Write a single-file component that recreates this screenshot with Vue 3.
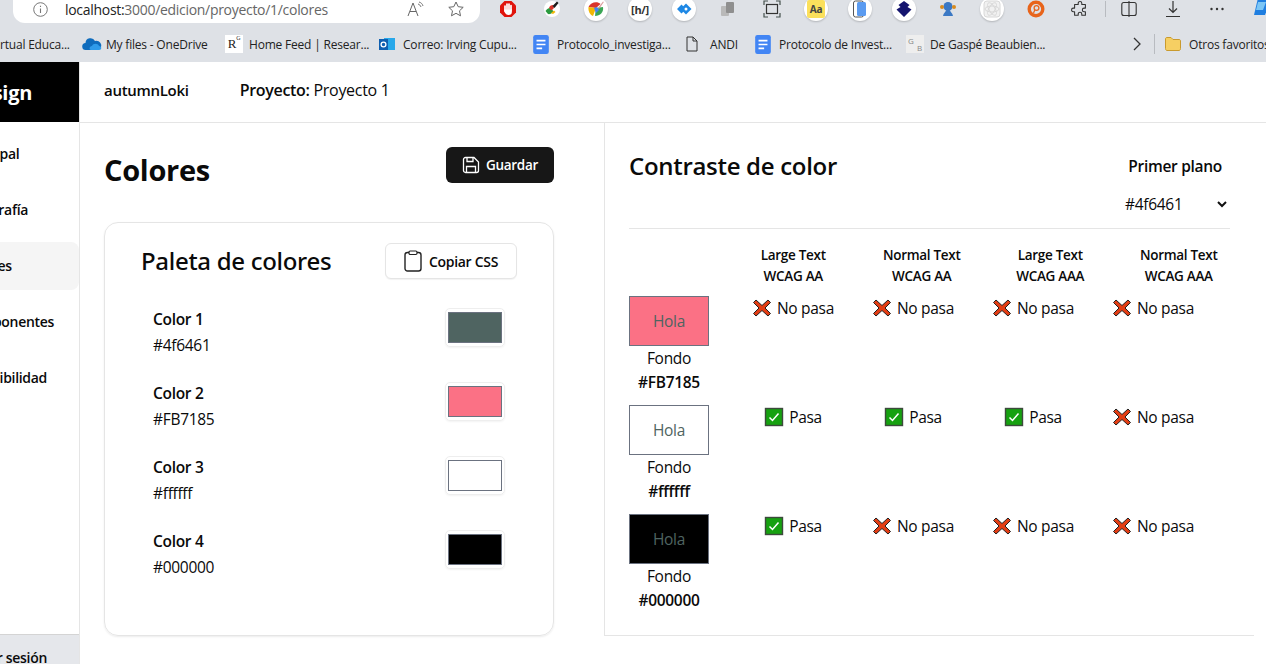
<template>
  <div class="page">
    <!-- Browser chrome -->
    <div class="browser">
      <div class="toolbar">
        <div class="address">
          <svg class="addr-info" width="15" height="15" viewBox="0 0 15 15" fill="none">
            <circle cx="7.500" cy="7.500" r="6.800" stroke="#777" stroke-width="1" />
            <path d="M7.500 6.500v4.500M7.500 3.800v1.300" stroke="#777" stroke-width="1.100" />
          </svg>
          <span class="url"><span class="url-host">localhost:</span>3000/edicion/proyecto/1/colores</span>
          <svg class="addr-read" width="20" height="16" viewBox="0 0 20 16" fill="none">
            <path d="M1 15 6 2l5 13M3 10.500h6" stroke="#666" stroke-width="1" />
            <path d="M11 3c1.500.5 2.500 1.500 3 3M12 1c2 .5 3.500 2 4 4" stroke="#666" stroke-width=".9" />
          </svg>
          <svg width="18" height="18" viewBox="0 0 18 18" fill="none">
            <path d="m9 2 2.200 4.700 5 .6-3.700 3.500 1 5L9 13.300 4.500 15.800l1-5L1.800 7.300l5-.6z" stroke="#666" stroke-width="1" stroke-linejoin="round" />
          </svg>
        </div>
        <div class="extensions">
          <span class="ext">
            <svg width="18" height="18" viewBox="0 0 18 18">
              <path d="M5.500 1h7L17 5.500v7L12.500 17h-7L1 12.500v-7z" fill="#e0140c" />
              <path d="M6 10.500V6M8 9.500V4M10 9.500V4M12 10V5.500" stroke="#fff" stroke-width="1.700" stroke-linecap="round" />
              <path d="M5.200 9.500h7.700v2.500c0 2-1.300 3-3.300 3-2.200 0-3-1-4.400-3.500z" fill="#fff" />
            </svg>
          </span>
          <span class="ext">
            <svg width="18" height="18" viewBox="0 0 18 18">
              <circle cx="9" cy="9" r="8" fill="#fff" />
              <path d="M2.500 11c1-2 3-3.500 5.500-3l2.500 3.500c-1.500 2-4 3-5.500 2.500z" fill="#2b9a3e" />
              <path d="M6 8c.5-2 2-3 4-3l1 3-2.500 2.500z" fill="#d9342b" />
              <path d="M9.500 6 14 1.500l1.500 1.500-4 5z" fill="#1c1c1c" />
              <path d="m8 13 3-2.500 1.500 1.500-2.500 2z" fill="#f2b705" />
            </svg>
          </span>
          <span class="ext ext-white">
            <svg width="18" height="18" viewBox="0 0 18 18">
              <path d="M1.500 7c2-5 9-6 12-3L9 8z" fill="#d9342b" />
              <path d="M1.500 7 9 8l-3 8C3 15 1 11 1.500 7z" fill="#f2b705" />
              <path d="m9 8 7-1c1 5-3 9-8 9z" fill="#3aa655" />
              <path d="m7 8 3-1 2 3-3 3z" fill="#4285f4" />
              <path d="M11 8 16 1.500l.8.6-4.800 7z" fill="#d99a9a" />
            </svg>
          </span>
          <span class="ext ext-white"><span class="ext-code">[h/]</span></span>
          <span class="ext ext-white">
            <svg width="18" height="18" viewBox="0 0 18 18">
              <path d="M11 3.500 16.500 9 11 14.500 5.500 9z" fill="#1e88e5" />
              <path d="M6.500 4.500 2 9l4.500 4.500L9 11 7 9l2-2z" fill="#1e88e5" />
              <circle cx="11" cy="9" r="1.500" fill="#fff" />
            </svg>
          </span>
          <span class="ext">
            <svg width="18" height="18" viewBox="0 0 18 18">
              <rect x="2" y="6" width="8" height="10" rx="1" fill="#b9b9b9" />
              <rect x="7" y="2" width="8" height="11" rx="1" fill="#8f8f8f" />
            </svg>
          </span>
          <span class="ext">
            <svg width="18" height="18" viewBox="0 0 18 18" fill="none">
              <path d="M1 5V1h4M13 1h4v4M17 13v4h-4M5 17H1v-4" stroke="#44504c" stroke-width="1.200" />
              <rect x="3.500" y="4.500" width="11" height="9" stroke="#333" stroke-width="1.200" />
            </svg>
          </span>
          <span class="ext ext-white"><span class="ext-aa">Aa</span></span>
          <span class="ext ext-white">
            <svg width="18" height="18" viewBox="0 0 18 18">
              <rect x="2.500" y="1" width="10" height="16" rx="2" fill="#fff" stroke="#555" />
              <rect x="6" y="2" width="9" height="14" rx="1.500" fill="#5b9bf0" />
            </svg>
          </span>
          <span class="ext ext-white">
            <svg width="18" height="18" viewBox="0 0 18 18">
              <path d="M9 1 14.500 5 12.500 7 16.500 9.500 9 17 1.500 9.500 5.500 7 3.500 5z" fill="#14146e" />
            </svg>
          </span>
          <span class="ext">
            <svg width="18" height="18" viewBox="0 0 18 18">
              <circle cx="9" cy="6.500" r="4.500" fill="#3b78c4" />
              <path d="M4 16c.5-3 2.500-4 3.500-6h3c1 2 3 3 3.500 6z" fill="#3b78c4" />
              <circle cx="3" cy="7" r="2" fill="#d88b1f" />
              <circle cx="15" cy="7" r="2" fill="#d88b1f" />
            </svg>
          </span>
          <span class="ext ext-white">
            <svg width="18" height="18" viewBox="0 0 18 18" fill="none" stroke="#d8d8d8">
              <rect x="1" y="1" width="16" height="16" rx="3" fill="#f1f1f1" />
              <ellipse cx="9" cy="9" rx="7" ry="3" />
              <ellipse cx="9" cy="9" rx="7" ry="3" transform="rotate(60 9 9)" />
              <ellipse cx="9" cy="9" rx="7" ry="3" transform="rotate(120 9 9)" />
            </svg>
          </span>
          <span class="ext">
            <svg width="18" height="18" viewBox="0 0 18 18" fill="none">
              <circle cx="9" cy="9" r="6.800" stroke="#e8641b" stroke-width="3.400" />
              <circle cx="9.500" cy="8" r="2.400" stroke="#e8641b" stroke-width="1.300" />
              <path d="M7.800 10 6.500 13" stroke="#e8641b" stroke-width="1.300" />
            </svg>
          </span>
          <span class="ext">
            <svg width="18" height="18" viewBox="0 0 20 20" fill="none">
              <path d="M8 3.500c0-2.500 4-2.500 4 0V5h4v4h-1.500c-2.500 0-2.500 4 0 4H16v4h-4v-1.500c0-2.500-4-2.500-4 0V17H4v-4H2.500c-2.500 0-2.500-4 0-4H4V5h4z" stroke="#333" stroke-width="1.200" stroke-linejoin="round" />
            </svg>
          </span>
          <span class="tool-divider"></span>
          <span class="ext">
            <svg width="16" height="16" viewBox="0 0 16 16" fill="none">
              <rect x=".8" y="1.500" width="14.400" height="13" rx="2" stroke="#333" stroke-width="1.100" />
              <path d="M8 0v16" stroke="#333" stroke-width="1.100" />
            </svg>
          </span>
          <span class="ext">
            <svg width="18" height="18" viewBox="0 0 18 18" fill="none">
              <path d="M9 1v11M5 8.500 9 12.500l4-4M2 16.500h14" stroke="#333" stroke-width="1.200" />
            </svg>
          </span>
          <span class="ext">
            <svg width="18" height="18" viewBox="0 0 18 18" fill="#333">
              <circle cx="3.500" cy="9" r="1.200" /><circle cx="9" cy="9" r="1.200" /><circle cx="14.500" cy="9" r="1.200" />
            </svg>
          </span>
          <span class="ext">
            <svg width="20" height="22" viewBox="0 0 20 22">
              <path d="M7 0h13l-6 17H3z" fill="#1f7ee0" />
              <path d="M7 4h8l-3 8H5z" fill="#7cc6f5" />
            </svg>
          </span>
        </div>
      </div>
      <div class="bookmarks">
        <span class="bm-first">rtual Educa...</span>
        <span v-for="b in bookmarks" :key="b.label" class="bm" :style="{ width: b.w + 'px' }">
          <svg v-if="b.icon === 'cloud'" width="20" height="14" viewBox="0 0 20 14">
            <path d="M4 13a3.500 3.500 0 0 1-.5-7A5 5 0 0 1 13 4a3.500 3.500 0 0 1 3 9z" fill="#0f6cbd" />
            <path d="M9 13c-2 0-2-4 1-4 1-3 6-3 7 0 3 0 3 4 0 4z" fill="#2f9bea" />
          </svg>
          <span v-else-if="b.icon === 'rg'" class="ic-rg">R<sup>G</sup></span>
          <svg v-else-if="b.icon === 'outlook'" width="16" height="16" viewBox="0 0 16 16">
            <rect x="5" y="2" width="11" height="12" fill="#28a8ea" />
            <rect x="0" y="3" width="9" height="11" fill="#0f5fb0" />
            <circle cx="4.500" cy="8.500" r="2.400" fill="none" stroke="#fff" stroke-width="1.300" />
          </svg>
          <svg v-else-if="b.icon === 'doc'" width="16" height="19" viewBox="0 0 14 17">
            <rect width="14" height="17" rx="2" fill="#4285f4" />
            <path d="M3 5h8M3 8.500h8M3 12h5" stroke="#fff" stroke-width="1.500" />
          </svg>
          <svg v-else-if="b.icon === 'file'" width="12" height="16" viewBox="0 0 12 16" fill="none">
            <path d="M1 1h6l4 4v10H1zM7 1v4h4" stroke="#333" stroke-width="1" />
          </svg>
          <span v-else-if="b.icon === 'gb'" class="ic-gb"><i>G</i><b>B</b></span>
          <span class="bm-label">{{ b.label }}</span>
        </span>
        <svg class="bm-more" width="10" height="14" viewBox="0 0 10 14" fill="none">
          <path d="m2 1 6 6-6 6" stroke="#333" stroke-width="1.300" />
        </svg>
        <span class="bm-divider"></span>
        <span class="bm bm-folder">
          <svg width="16" height="14" viewBox="0 0 16 14">
            <path d="M.5 2c0-1 .5-1.500 1.500-1.500h4l2 2h6c1 0 1.500.5 1.500 1.500v7.500c0 1-.5 2-1.500 2H2c-1 0-1.500-1-1.500-2z" fill="#f6cf63" stroke="#c99a2e" />
          </svg>
          <span class="bm-label">Otros favoritos</span>
        </span>
      </div>
    </div>

    <div class="app">
      <!-- Sidebar, its left part is cut off in the capture -->
      <aside class="sidebar">
        <div class="logo">Design</div>
        <nav class="nav">
          <div v-for="item in navItems" :key="item.label" class="nav-item" :class="{ active: item.active }">
            {{ item.label }}
          </div>
        </nav>
        <div class="logout">Cerrar sesión</div>
      </aside>

      <div class="main">
        <header class="topbar">
          <span class="user">autumnLoki</span>
          <span class="project"><strong>Proyecto:</strong> Proyecto 1</span>
        </header>

        <div class="content">
          <section class="left">
            <div class="left-head">
              <h1>Colores</h1>
              <button class="btn-save">
                <svg width="18" height="18" viewBox="0 0 18 18" fill="none">
                  <path d="M3.500 1.500h8.500l4.500 4.500v8.500a2 2 0 0 1-2 2h-11a2 2 0 0 1-2-2v-11a2 2 0 0 1 2-2z" stroke="#fff" stroke-width="1.300" />
                  <path d="M5 1.500v4h6v-4M4.500 16.500v-6h9v6" stroke="#fff" stroke-width="1.300" />
                </svg>
                Guardar
              </button>
            </div>

            <div class="card">
              <div class="card-head">
                <h2>Paleta de colores</h2>
                <button class="btn-copy">
                  <svg width="18" height="22" viewBox="0 0 18 22" fill="none">
                    <rect x="1" y="2.500" width="16" height="18.500" rx="2.500" stroke="#222" stroke-width="1.400" />
                    <rect x="5" y="1" width="8" height="3.500" rx="1.200" fill="#fff" stroke="#222" stroke-width="1.200" />
                  </svg>
                  Copiar CSS
                </button>
              </div>
              <div class="palette">
                <div v-for="c in palette" :key="c.name" class="color-row">
                  <div>
                    <div class="color-name">{{ c.name }}</div>
                    <div class="color-hex">{{ c.hex }}</div>
                  </div>
                  <div class="swatch-wrap">
                    <div class="swatch" :style="{ background: c.hex }"></div>
                  </div>
                </div>
              </div>
            </div>
          </section>

          <section class="right">
            <div class="right-head">
              <h2>Contraste de color</h2>
              <div class="fg-select">
                <div class="fg-label">Primer plano</div>
                <div class="fg-value">
                  #4f6461
                  <svg width="10" height="7" viewBox="0 0 10 7" fill="none">
                    <path d="m1 1 4 4 4-4" stroke="#111" stroke-width="2" />
                  </svg>
                </div>
              </div>
            </div>

            <div class="col-heads">
              <div v-for="h in headers" :key="h[0] + h[1]" class="col-head">{{ h[0] }}<br />{{ h[1] }}</div>
            </div>

            <div v-for="row in rows" :key="row.hex" class="row">
              <div class="bg-cell">
                <div class="bg-box" :style="{ background: row.hex }">Hola</div>
                <div class="bg-label">Fondo</div>
                <div class="bg-hex">{{ row.hex }}</div>
              </div>
              <div v-for="(ok, i) in row.res" :key="i" class="res">
                <svg v-if="ok" width="20" height="20" viewBox="0 0 20 20">
                  <rect x="1.500" y="1.500" width="17" height="17" fill="#16a110" stroke="#3c4a3c" stroke-width="1.400" />
                  <path d="m5.500 10.500 3 3 6-7" fill="none" stroke="#fff" stroke-width="1.500" />
                </svg>
                <svg v-else width="20" height="20" viewBox="0 0 20 20">
                  <path d="M4 2 10 7.500 16 2 18.500 4.500 13 10l5.500 5.500L16 18l-6-5.500L4 18l-2.500-2.500L7 10 1.500 4.500z" fill="#e23d14" stroke="#222" stroke-width="1" stroke-linejoin="round" />
                </svg>
                {{ ok ? "Pasa" : "No pasa" }}
              </div>
            </div>
          </section>
        </div>
      </div>
    </div>
  </div>
</template>

<script setup>
const bookmarks = [
  { label: "My files - OneDrive", icon: "cloud", w: 143 },
  { label: "Home Feed | Resear...", icon: "rg", w: 154 },
  { label: "Correo: Irving Cupu...", icon: "outlook", w: 154 },
  { label: "Protocolo_investiga...", icon: "doc", w: 153 },
  { label: "ANDI", icon: "file", w: 69 },
  { label: "Protocolo de Invest...", icon: "doc", w: 151 },
  { label: "De Gaspé Beaubien...", icon: "gb", w: 226 },
];

const navItems = [
  { label: "Principal" },
  { label: "Tipografía" },
  { label: "Colores", active: true },
  { label: "Componentes" },
  { label: "Accesibilidad" },
];

const palette = [
  { name: "Color 1", hex: "#4f6461" },
  { name: "Color 2", hex: "#FB7185" },
  { name: "Color 3", hex: "#ffffff" },
  { name: "Color 4", hex: "#000000" },
];

const headers = [
  ["Large Text", "WCAG AA"],
  ["Normal Text", "WCAG AA"],
  ["Large Text", "WCAG AAA"],
  ["Normal Text", "WCAG AAA"],
];

const rows = [
  { hex: "#FB7185", res: [false, false, false, false] },
  { hex: "#ffffff", res: [true, true, true, false] },
  { hex: "#000000", res: [true, false, false, false] },
];
</script>

<style>
html,
body {
  margin: 0;
  overflow: hidden;
  background: #fff;
}
</style>

<style scoped>
.page {
  width: 1266px;
  height: 664px;
  overflow: hidden;
  font-family: "Open Sans", "Noto Sans", sans-serif;
  color: #0a0a0a;
  letter-spacing: -0.3px;
}

.browser {
  height: 62px;
  background: #dee1e6;
}

.toolbar {
  height: 24px;
  display: flex;
  padding-left: 13px;
}

.address {
  width: 467px;
  height: 23px;
  flex-shrink: 0;
  box-sizing: border-box;
  padding: 0 15px 5px 20px;
  background: #fff;
  border-radius: 0 0 12px 12px;
  display: flex;
  align-items: center;
  font-size: 14px;
  color: #666;
}

.addr-info {
  margin-right: 17px;
}

.url {
  flex: 1;
}

.url-host {
  color: #222;
}

.addr-read {
  margin-right: 20px;
}

.extensions {
  display: flex;
  margin-left: 6px;
  height: 18px;
}

.ext {
  width: 44px;
  height: 18px;
  flex-shrink: 0;
  display: flex;
  align-items: center;
  justify-content: center;
  position: relative;
}

.ext-white::before {
  content: "";
  position: absolute;
  left: 10px;
  top: -3px;
  width: 24px;
  height: 24px;
  border-radius: 50%;
  background: #fff;
  box-shadow: 0 1px 2px rgba(0, 0, 0, 0.2);
}

.ext svg {
  position: relative;
}

.ext-code {
  position: relative;
  font-size: 11px;
  font-weight: 700;
  color: #333;
}

.ext-aa {
  position: relative;
  width: 18px;
  height: 18px;
  background: #fbe05c;
  border-radius: 2px;
  font-size: 10px;
  font-weight: 700;
  line-height: 18px;
  text-align: center;
  color: #444;
}

.tool-divider {
  width: 1px;
  height: 16px;
  flex-shrink: 0;
  margin: 1px 1px 0 3px;
  background: #b8bbc0;
}

.bookmarks {
  height: 38px;
  box-sizing: border-box;
  padding-top: 2px;
  display: flex;
  align-items: center;
  font-size: 12px;
  color: #222;
  letter-spacing: -0.2px;
  white-space: nowrap;
}

.bm {
  display: grid;
  grid-template-columns: 24px auto;
  align-items: center;
  flex-shrink: 0;
}

.bm-first {
  width: 82px;
  flex-shrink: 0;
}

.ic-rg {
  width: 18px;
  height: 18px;
  background: #fff;
  font: 13px "Liberation Serif", serif;
  display: flex;
  justify-content: center;
  align-items: center;
}

.ic-rg sup {
  font-size: 6px;
  line-height: 1;
  align-self: flex-start;
}

.ic-gb {
  width: 18px;
  height: 18px;
  background: #eee;
  color: #888;
  font-size: 8px;
  display: flex;
  justify-content: space-between;
  padding: 0 2px;
  box-sizing: border-box;
}

.ic-gb i {
  font-style: normal;
}

.ic-gb b {
  font-weight: 400;
  align-self: flex-end;
}

.bm-more {
  flex-shrink: 0;
}

.bm-divider {
  width: 1px;
  height: 20px;
  background: #b8bbc0;
  margin: 0 10px 0 12px;
  flex-shrink: 0;
}

.app {
  height: 602px;
  display: flex;
}

.sidebar {
  width: 80px;
  flex-shrink: 0;
  box-sizing: border-box;
  border-right: 1px solid #e5e5e5;
  display: flex;
  flex-direction: column;
  overflow: hidden;
  white-space: nowrap;
}

.logo {
  height: 60px;
  flex-shrink: 0;
  box-sizing: border-box;
  background: #000;
  color: #fff;
  font-size: 20px;
  font-weight: 700;
  line-height: 62px;
  display: flex;
  justify-content: flex-end;
  padding-right: 47px;
}

.nav {
  flex: 1;
  padding-top: 8px;
  display: flex;
  flex-direction: column;
  gap: 8px;
  font-size: 14px;
  font-weight: 600;
}

.nav-item {
  height: 48px;
  margin-left: -37px;
  line-height: 48px;
}

.nav-item.active {
  background: #f5f5f5;
  border-radius: 0 8px 8px 0;
}

.logout {
  height: 30px;
  flex-shrink: 0;
  box-sizing: border-box;
  background: #e5e7eb;
  border-top: 1px solid #d4d4d4;
  font-size: 14px;
  font-weight: 600;
  line-height: 46px;
  display: flex;
  justify-content: flex-end;
  padding-right: 32px;
}

.main {
  flex: 1;
  min-width: 0;
}

.topbar {
  height: 61px;
  box-sizing: border-box;
  padding: 0 24px 4px;
  display: flex;
  align-items: center;
  gap: 51px;
  font-size: 16px;
  border-bottom: 1px solid #e5e5e5;
}

.user {
  font-weight: 600;
  font-size: 15px;
}

.project strong {
  font-weight: 600;
}

.content {
  display: flex;
  align-items: flex-start;
}

.left {
  width: 525px;
  height: 513px;
  box-sizing: border-box;
  padding: 24px 50px 0 24px;
  border-right: 1px solid #e5e5e5;
}

.left-head {
  height: 75px;
  display: flex;
  justify-content: space-between;
}

h1 {
  margin: 3px 0 0;
  font-size: 29px;
  line-height: 40px;
  font-weight: 700;
}

.btn-save {
  width: 108px;
  height: 36px;
  border: none;
  border-radius: 6px;
  background: #171717;
  color: #fff;
  font: 600 13.5px "Open Sans", sans-serif;
  letter-spacing: -0.3px;
  display: flex;
  align-items: center;
  justify-content: center;
  gap: 6px;
}

.card {
  height: 414px;
  box-sizing: border-box;
  border: 1px solid #e5e5e5;
  border-radius: 14px;
  box-shadow: 0 1px 2px rgba(0, 0, 0, 0.08);
  padding: 20px 36px 0;
}

.card-head {
  display: flex;
  justify-content: space-between;
  align-items: center;
  height: 36px;
}

h2 {
  margin: 0;
  font-family: "Noto Sans", "Open Sans", sans-serif;
  font-size: 24px;
  font-weight: 500;
  line-height: 38px;
}

.btn-copy {
  width: 132px;
  height: 36px;
  background: #fff;
  border: 1px solid #e5e5e5;
  border-radius: 6px;
  box-shadow: 0 1px 1px rgba(0, 0, 0, 0.05);
  color: #0a0a0a;
  font: 600 14px "Open Sans", sans-serif;
  letter-spacing: -0.3px;
  display: flex;
  align-items: center;
  justify-content: center;
  gap: 7px;
}

.palette {
  margin-top: 27px;
  padding: 0 12px;
  display: flex;
  flex-direction: column;
  gap: 22px;
}

.color-row {
  height: 52px;
  display: flex;
  justify-content: space-between;
  align-items: flex-start;
}

.color-name {
  font-size: 15.5px;
  font-weight: 600;
  line-height: 26px;
}

.color-hex {
  font-size: 15.5px;
  line-height: 26px;
}

.swatch-wrap {
  width: 60px;
  height: 39px;
  box-sizing: border-box;
  padding: 3px 2px;
  border: 1px solid #eee;
  border-radius: 5px;
  box-shadow: 0 1px 2px rgba(0, 0, 0, 0.05);
  margin-top: 2px;
}

.swatch {
  height: 100%;
  box-sizing: border-box;
  border: 1px solid #6b7280;
}

.right {
  width: 649px;
  flex-shrink: 0;
  box-sizing: border-box;
  padding: 0 0 0 24px;
  height: 513px;
  border-bottom: 1px solid #e5e5e5;
}

.right-head {
  width: 601px;
  height: 106px;
  box-sizing: border-box;
  border-bottom: 1px solid #e5e5e5;
  display: flex;
  justify-content: space-between;
  align-items: flex-start;
}

.right-head h2 {
  margin-top: 24px;
  font-family: "Open Sans", sans-serif;
  font-weight: 600;
}

.fg-select {
  margin-top: 32px;
  width: 105px;
}

.fg-label {
  font-size: 15.5px;
  font-weight: 600;
  text-align: right;
  padding-right: 8px;
  line-height: 22px;
}

.fg-value {
  margin-top: 16px;
  font-size: 15.5px;
  line-height: 22px;
  display: flex;
  justify-content: space-between;
  align-items: center;
  padding-right: 3px;
}

.col-heads {
  display: grid;
  grid-template-columns: repeat(4, 128.5px);
  margin: 16px 0 0 100px;
  width: 520px;
  height: 51px;
}

.col-head {
  font-size: 13.5px;
  font-weight: 600;
  line-height: 21px;
  text-align: center;
}

.row {
  display: grid;
  grid-template-columns: 104px repeat(4, 120px);
  height: 109px;
}

.bg-cell {
  width: 80px;
  text-align: center;
  font-size: 15.5px;
}

.bg-box {
  height: 50px;
  box-sizing: border-box;
  border: 1px solid #6b7280;
  color: #4f6461;
  line-height: 49px;
}

.bg-label {
  line-height: 24px;
}

.bg-hex {
  font-weight: 600;
  line-height: 24px;
}

.res {
  display: flex;
  justify-content: center;
  align-items: flex-start;
  gap: 5px;
  font-size: 15.5px;
  line-height: 24px;
}

.res svg {
  margin-top: 2px;
}
</style>
